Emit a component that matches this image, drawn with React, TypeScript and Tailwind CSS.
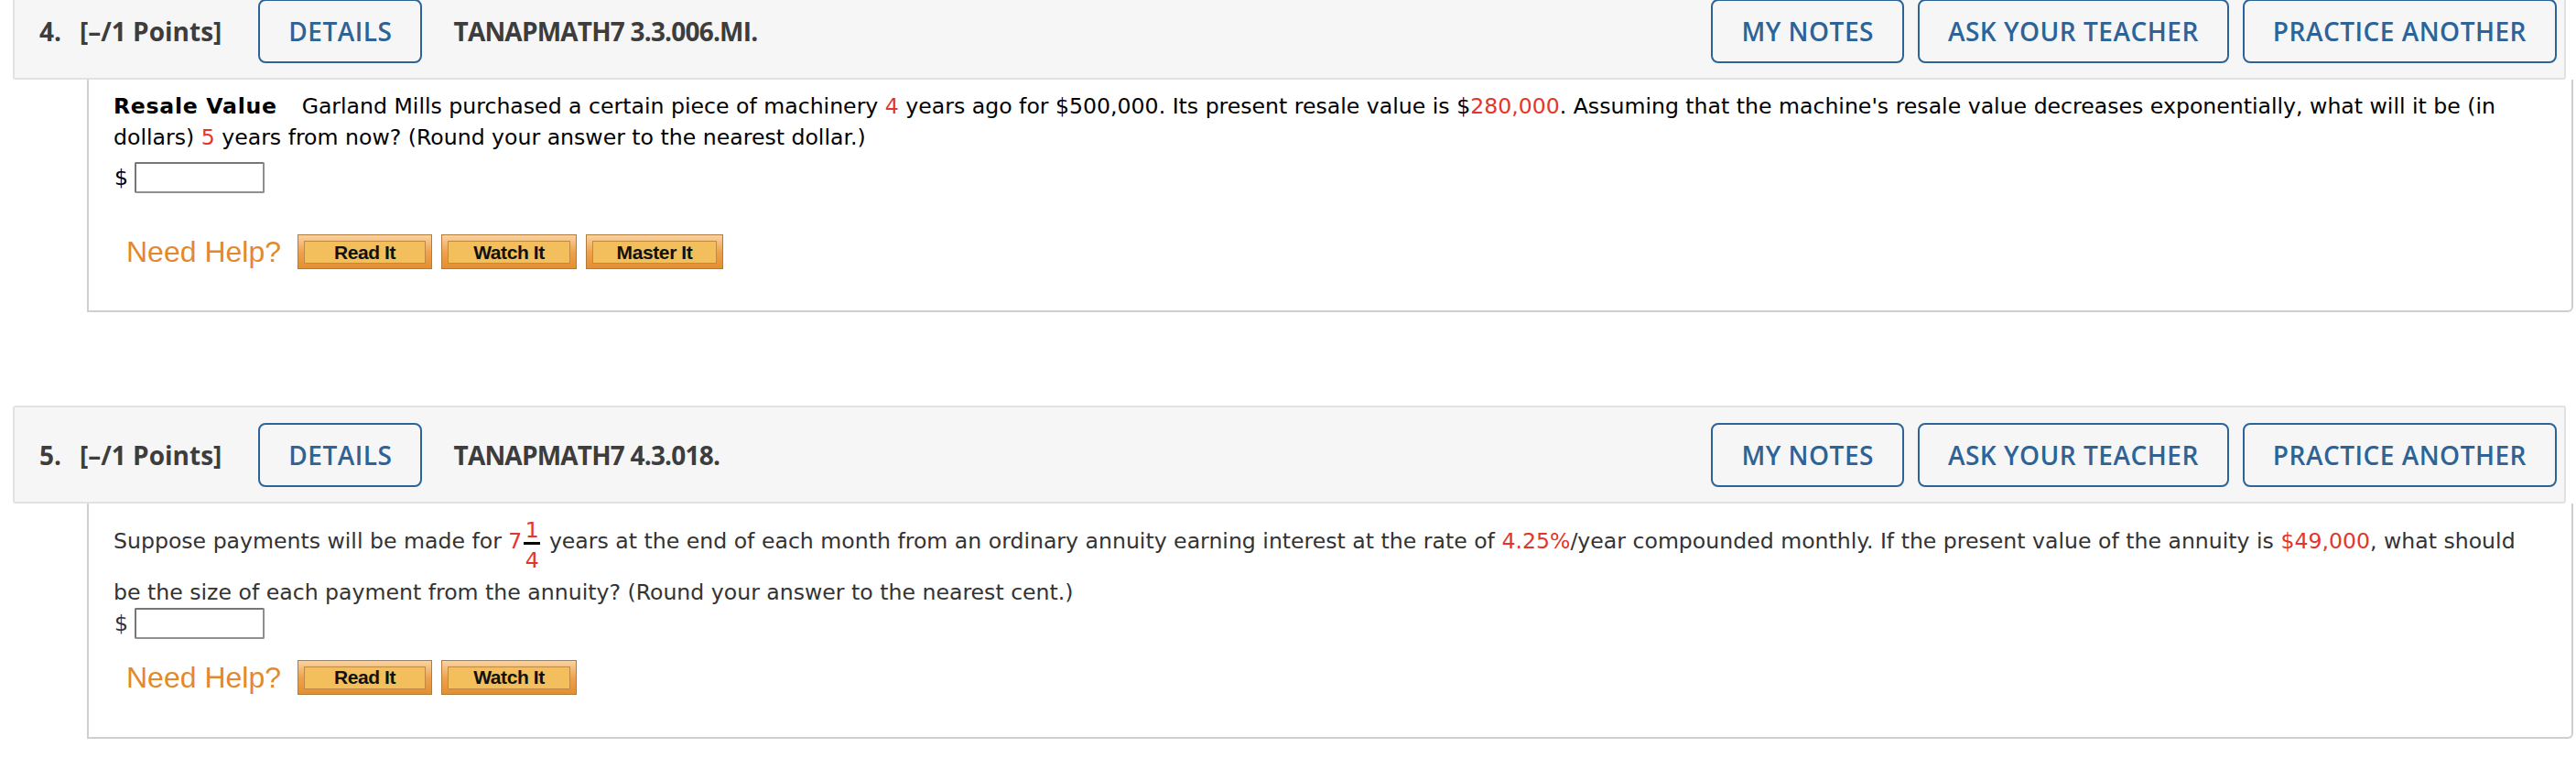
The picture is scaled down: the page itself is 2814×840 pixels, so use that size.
import React from "react";

const RED = "text-[#e4352b]";

function HelpButton({ label, w }: { label: string; w: string }) {
  return (
    <div
      className={`${w} h-[38px] border border-[#b07b3b] bg-gradient-to-b from-[#f9d3a0] via-[#efa24c] to-[#e48f30] pt-[6px] pb-[5px] px-[6px] flex`}
    >
      <div className="flex-1 border border-[#c08a45] bg-[#f2bf5c] flex items-center justify-center font-['Liberation_Sans',Arial,sans-serif] font-bold text-[21px] text-[#111] tracking-[-0.4px]">
        {label}
      </div>
    </div>
  );
}

function NeedHelp({ buttons }: { buttons: { label: string; w: string }[] }) {
  return (
    <div className="flex items-center pl-[14px]">
      <span className="font-['Liberation_Sans',Arial,sans-serif] text-[32px] text-[#e3882e] leading-none">
        Need Help?
      </span>
      <div className="flex gap-[10px] ml-[18px]">
        {buttons.map((b) => (
          <HelpButton key={b.label} label={b.label} w={b.w} />
        ))}
      </div>
    </div>
  );
}

function OutlineButton({ children }: { children: React.ReactNode }) {
  return (
    <div className="h-[70px] px-[31px] border-2 border-[#2d6396] rounded-[8px] flex items-center text-[#2d6396] text-[28px] font-semibold tracking-[0.5px] font-['Open_Sans',sans-serif] whitespace-nowrap">
      {children}
    </div>
  );
}

function Header({ n, code }: { n: number; code: string }) {
  return (
    <div className="flex items-center w-[2789px] h-[107px] border-2 border-[#e1e1e1] rounded-[3px] bg-[#f6f6f6] pl-[27px] pr-[8px] font-['Open_Sans',sans-serif] text-[#3d3d3d]">
      <span className="text-[28px] font-bold">{n}.</span>
      <span className="ml-[20px] text-[28px] font-bold">[–/1 Points]</span>
      <div className="ml-[40px]">
        <OutlineButton>DETAILS</OutlineButton>
      </div>
      <span className="ml-[34px] text-[28px] font-bold tracking-[-0.8px]">{code}</span>
      <div className="ml-auto flex gap-[15px]">
        <OutlineButton>MY NOTES</OutlineButton>
        <OutlineButton>ASK YOUR TEACHER</OutlineButton>
        <OutlineButton>PRACTICE ANOTHER</OutlineButton>
      </div>
    </div>
  );
}

function AnswerRow() {
  return (
    <div className="flex items-center gap-[7px] pl-[1px]">
      <span>$</span>
      <div className="w-[142px] h-[34px] border-2 border-[#8f8f8f] border-t-[#777] border-l-[#777] rounded-[2px] bg-white" />
    </div>
  );
}

export default function App() {
  return (
    <div className="w-[2814px] h-[840px] overflow-hidden bg-white">
      <div className="pl-[14px] flex flex-col">
        {/* Question 4 */}
        <div className="-mt-[20px]">
          <Header n={4} code="TANAPMATH7 3.3.006.MI." />
          <div className="ml-[81px] w-[2716px] border-l-2 border-r-2 border-b-2 border-[#cfcfcf] rounded-br-[6px] pl-[27px] pt-[12px] pb-[45px] font-['DejaVu_Sans',Verdana,sans-serif] text-[23.6px] leading-[34px] text-black">
            <div className="whitespace-nowrap">
              <span className="font-bold tracking-[0.7px]">Resale Value</span>
              <span className="ml-[27px]">
                Garland Mills purchased a certain piece of machinery <span className={RED}>4</span> years ago for
                $500,000. Its present resale value is $<span className={RED}>280,000</span>. Assuming that the
                machine's resale value decreases exponentially, what will it be (in
              </span>
            </div>
            <div className="whitespace-nowrap">
              dollars) <span className={RED}>5</span> years from now? (Round your answer to the nearest dollar.)
            </div>
            <div className="mt-[10px]">
              <AnswerRow />
            </div>
            <div className="mt-[45px]">
              <NeedHelp
                buttons={[
                  { label: "Read It", w: "w-[147px]" },
                  { label: "Watch It", w: "w-[148px]" },
                  { label: "Master It", w: "w-[150px]" },
                ]}
              />
            </div>
          </div>
        </div>

        {/* Question 5 */}
        <div className="mt-[102px]">
          <Header n={5} code="TANAPMATH7 4.3.018." />
          <div className="ml-[81px] w-[2716px] border-l-2 border-r-2 border-b-2 border-[#cfcfcf] rounded-br-[6px] pl-[27px] pt-[24px] pb-[46px] font-['DejaVu_Sans',Verdana,sans-serif] text-[23.6px] leading-[34px] text-[#333]">
            <div className="whitespace-nowrap">
              Suppose payments will be made for <span className={RED}>7</span>
              <span className="inline-flex flex-col items-center align-middle -my-[13px] mx-[2px] text-[#e4352b]">
                <span className="leading-[22px] pt-[5px]">1</span>
                <span className="mt-[2px] h-[3px] w-[18px] bg-black" />
                <span className="leading-[22px] pt-[6px]">4</span>
              </span>{" "}
              years at the end of each month from an ordinary annuity earning interest at the rate of{" "}
              <span className={RED}>4.25%</span>/year compounded monthly. If the present value of the annuity is{" "}
              <span className={RED}>$49,000</span>, what should
            </div>
            <div className="whitespace-nowrap mt-[20px]">
              be the size of each payment from the annuity? (Round your answer to the nearest cent.)
            </div>
            <div>
              <AnswerRow />
            </div>
            <div className="mt-[23px]">
              <NeedHelp
                buttons={[
                  { label: "Read It", w: "w-[147px]" },
                  { label: "Watch It", w: "w-[148px]" },
                ]}
              />
            </div>
          </div>
        </div>
      </div>
    </div>
  );
}
